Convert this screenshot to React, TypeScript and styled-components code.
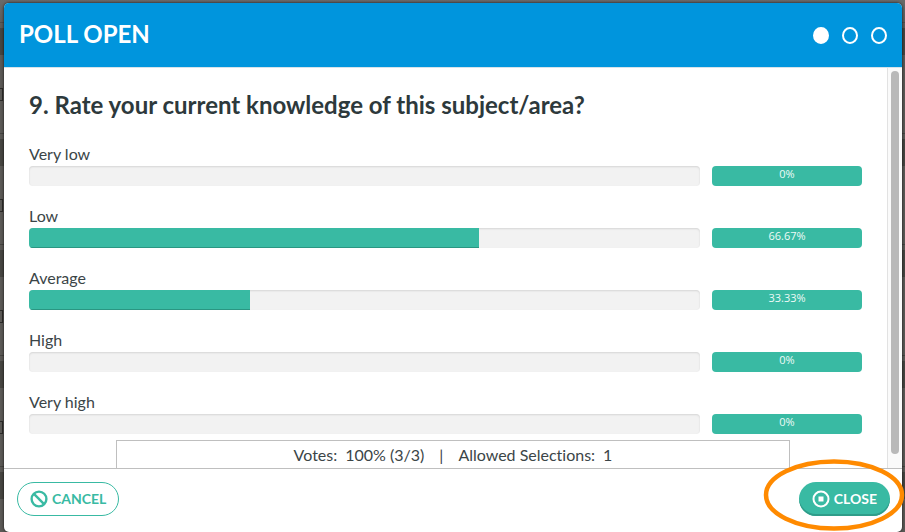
import React from "react";
import styled, { createGlobalStyle } from "styled-components";

const teal = "#39baa3";

const GlobalStyle = createGlobalStyle`
  *, *::before, *::after { box-sizing: border-box; }
  body {
    margin: 0;
    font-family: "Lato", "Open Sans", sans-serif;
    font-variant-ligatures: none;
    color: #3b4547;
  }
  h1, h2, p { margin: 0; }
`;

const Backdrop = styled.div`
  min-height: 100vh;
  padding: 3px 3px 0 4px;
  display: flex;
  background:
    linear-gradient(#6a6a6a, rgba(106, 106, 106, 0) 30px),
    linear-gradient(transparent 89px, #5b5956 89px 100px, transparent 100px) 0 0 / 2px 111px repeat-y,
    linear-gradient(transparent 88px, #2c2b29 88px 101px, transparent 101px) 0 0 / 3px 111px repeat-y,
    repeating-linear-gradient(
      #5b5956 0 22px,
      #454441 22px 23px,
      #5b5956 23px 28px,
      #464541 28px 55px,
      #5b5956 55px 111px
    );
`;

const Dialog = styled.main`
  flex: 1;
  min-width: 0;
  display: flex;
  flex-direction: column;
  background: #fff;
  border-radius: 5px;
  box-shadow: 0 0 3px rgba(0, 0, 0, 0.8);
`;

const Header = styled.header`
  height: 64px;
  padding: 0 15px;
  display: flex;
  align-items: center;
  justify-content: space-between;
  background: #0095dd;
  color: #fff;
  border-radius: 5px 5px 0 0;
`;

const Title = styled.h1`
  padding-bottom: 2px;
  font-size: 24px;
  line-height: 32px;
  font-weight: 700;
`;

const Steps = styled.div`
  display: flex;
  gap: 13px;
`;

const Step = styled.span<{ $active?: boolean }>`
  width: 16px;
  height: 17px;
  border: 2px solid #fff;
  border-radius: 50%;
  background: ${(p) => (p.$active ? "#fff" : "transparent")};
`;

const Body = styled.div`
  flex: 1;
  display: flex;
  border-top: 1px solid #d5e3ea;
`;

const Content = styled.section`
  flex: 1;
  min-width: 0;
  padding: 21px 25px 0;
`;

const Question = styled.h2`
  margin-bottom: 23px;
  font-size: 24px;
  line-height: 32px;
  font-weight: 700;
  color: #2d393c;
`;

const Results = styled.div`
  display: grid;
  gap: 20px;
`;

const Result = styled.div`
  display: grid;
  grid-template-columns: minmax(0, 1fr) 150px;
  column-gap: 12px;
`;

const Label = styled.span`
  grid-column: 1 / -1;
  padding-bottom: 2px;
  font-size: 16px;
  line-height: 20px;
`;

const Track = styled.div`
  height: 20px;
  overflow: hidden;
  border-radius: 4px;
  background: #f2f2f2;
  box-shadow: inset 0 1px 2px rgba(0, 0, 0, 0.12);
`;

const Fill = styled.div`
  height: 100%;
  background: ${teal};
  box-shadow: inset 0 -1px 0 #2a9682;
`;

const Percent = styled.span`
  height: 20px;
  border-radius: 4px;
  background: ${teal};
  color: #eefaf7;
  font-family: "Open Sans", sans-serif;
  font-size: 11px;
  line-height: 16px;
  text-align: center;
`;

const ScrollTrack = styled.div`
  width: 15px;
  padding: 3px 3px 14px;
  display: flex;
  border-left: 1px solid #e2e2e2;
  background: #fafafa;
`;

const ScrollThumb = styled.div`
  width: 8px;
  border-radius: 4px;
  background: #b9b9b9;
`;

const Summary = styled.div`
  width: 75%;
  height: 28px;
  margin: -28px auto 0;
  display: flex;
  justify-content: center;
  gap: 15px;
  border: 1px solid #bfbfbf;
  border-bottom: 0;
  background: #fff;
  font-size: 16px;
  line-height: 27px;
`;

const Stat = styled.span`
  display: flex;
  gap: 8px;
`;

const Footer = styled.footer`
  height: 64px;
  padding: 13px 12px 16px 13px;
  display: flex;
  justify-content: space-between;
  border-top: 1px solid #bfbfbf;
`;

const Button = styled.button<{ $primary?: boolean }>`
  height: 34px;
  padding: 0 12px;
  display: flex;
  align-items: center;
  gap: 4px;
  border: 1px solid ${teal};
  border-radius: 17px;
  background: ${(p) => (p.$primary ? teal : "#fff")};
  color: ${(p) => (p.$primary ? "#fff" : teal)};
  ${(p) =>
    p.$primary &&
    `
    padding: 0 13px;
    border: 0;
    box-shadow: inset 0 -2px 0 #2f9c89;
  `}
  font: 700 14px/20px "Lato", "Open Sans", sans-serif;
`;

const Highlighted = styled.div`
  position: relative;
`;

const Ring = styled.svg`
  position: absolute;
  top: -23px;
  right: -15px;
  pointer-events: none;
`;

const results = [
  { label: "Very low", width: 0, percent: "0%" },
  { label: "Low", width: 67, percent: "66.67%" },
  { label: "Average", width: 33, percent: "33.33%" },
  { label: "High", width: 0, percent: "0%" },
  { label: "Very high", width: 0, percent: "0%" },
];

export default function App() {
  return (
    <>
      <GlobalStyle />
      <Backdrop>
        <Dialog>
          <Header>
            <Title>POLL OPEN</Title>
            <Steps aria-label="Step 1 of 3">
              <Step $active />
              <Step />
              <Step />
            </Steps>
          </Header>
          <Body>
            <Content>
              <Question>9. Rate your current knowledge of this subject/area?</Question>
              <Results>
                {results.map((r) => (
                  <Result key={r.label}>
                    <Label>{r.label}</Label>
                    <Track role="progressbar" aria-label={r.label} aria-valuenow={r.width}>
                      <Fill style={{ width: `${r.width}%` }} />
                    </Track>
                    <Percent>{r.percent}</Percent>
                  </Result>
                ))}
              </Results>
            </Content>
            <ScrollTrack>
              <ScrollThumb />
            </ScrollTrack>
          </Body>
          <Summary>
            <Stat><span>Votes:</span><span>100% (3/3)</span></Stat>
            <span>|</span>
            <Stat><span>Allowed Selections:</span><span>1</span></Stat>
          </Summary>
          <Footer>
            <Button type="button">
              <svg width="18" height="18" viewBox="0 0 18 18" fill="none" stroke="currentColor" strokeWidth="2.4" aria-hidden="true">
                <circle cx="9" cy="9" r="7.4" />
                <path d="M3.7 3.7l10.6 10.6" />
              </svg>
              CANCEL
            </Button>
            <Highlighted>
              <Button type="button" $primary>
                <svg width="18" height="18" viewBox="0 0 18 18" fill="none" stroke="currentColor" strokeWidth="2" aria-hidden="true">
                  <circle cx="9" cy="9" r="7.5" />
                  <rect x="6.5" y="6.5" width="5" height="5" fill="currentColor" stroke="none" />
                </svg>
                CLOSE
              </Button>
              <Ring width="142" height="72" viewBox="0 0 142 72" fill="none" aria-hidden="true">
                <ellipse cx="71" cy="36" rx="68" ry="33.5" stroke="#ff8a00" strokeWidth="4.5" />
              </Ring>
            </Highlighted>
          </Footer>
        </Dialog>
      </Backdrop>
    </>
  );
}
